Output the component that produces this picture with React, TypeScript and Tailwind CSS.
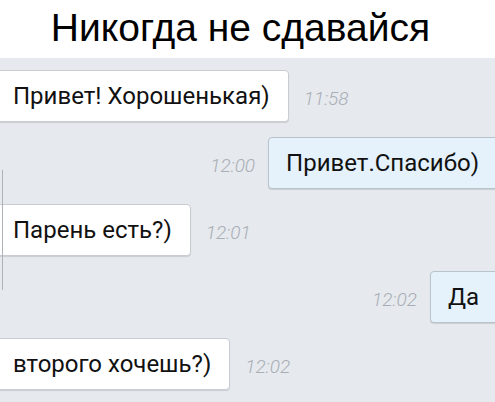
const messages = [
  { text: "Привет! Хорошенькая)", time: "11:58", mine: false },
  { text: "Привет.Спасибо)", time: "12:00", mine: true },
  { text: "Парень есть?)", time: "12:01", mine: false },
  { text: "Да", time: "12:02", mine: true },
  { text: "второго хочешь?)", time: "12:02", mine: false },
];

const App = () => {
  return (
    <div className="w-[495px] h-[402px] overflow-hidden bg-white font-['Roboto',sans-serif]">
      {/* Title */}
      <div className="flex h-[58px] items-center justify-center bg-white pb-1 pr-[14px]">
        <h1 className="font-['Liberation_Sans',Arial,sans-serif] text-[39px] leading-none text-black">
          Никогда не сдавайся
        </h1>
      </div>

      {/* Chat */}
      <div className="relative flex h-[344px] flex-col gap-[15px] bg-[#e6e9ee] pt-[12px]">
        <div className="absolute left-[2px] top-[112px] h-[120px] w-px bg-[#aeb3b9]" />
        {messages.map((m, i) =>
          m.mine ? (
            <div key={i} className="flex items-center justify-end gap-[13px] -mr-[8px]">
              <span className="mt-[6px] text-[19px] italic font-light text-[#a9aeb5]">
                {m.time}
              </span>
              <div className="flex h-[52px] items-center rounded-[4px] border border-[#b9c3cc] bg-[#e5f2fc] pl-[17px] pr-[23px] text-[24px] text-[#111] shadow-[0_1px_1px_rgba(0,0,0,0.12)]">
                {m.text}
              </div>
            </div>
          ) : (
            <div key={i} className="flex items-center gap-[15px] -ml-[6px]">
              <div className="flex h-[52px] items-center rounded-[4px] border border-[#c9cdd2] bg-white pl-[18px] pr-[18px] text-[24px] text-[#111] shadow-[0_1px_1px_rgba(0,0,0,0.12)]">
                {m.text}
              </div>
              <span className="mt-[6px] text-[19px] italic font-light text-[#a9aeb5]">
                {m.time}
              </span>
            </div>
          )
        )}
      </div>
    </div>
  );
};

export default App;
